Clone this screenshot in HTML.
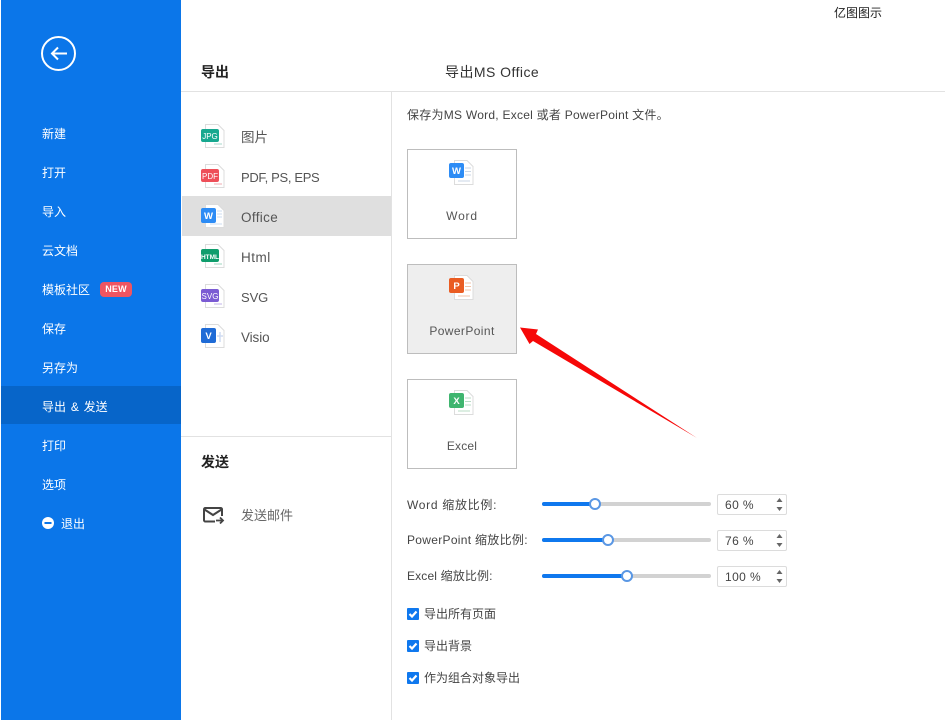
<!DOCTYPE html>
<html><head><meta charset="utf-8">
<style>
html,body{margin:0;padding:0;background:#fff}
#p{position:relative;width:945px;height:720px;overflow:hidden;background:#fff;font-family:"Liberation Sans","Noto Sans CJK SC",sans-serif;color:#4a4a4a;font-size:12px}
#p div,#p span.a,#p svg{position:absolute}
.t{white-space:nowrap;line-height:18px}
.m{left:42px;color:#fff;font-size:12px;line-height:18px;white-space:nowrap}
.l{left:241px;font-size:13.5px;line-height:20px;color:#555;white-space:nowrap}
.b{left:407px;width:108px;height:88px;border:1px solid #bdbdbd;background:#fff}
.bl{left:407px;width:110px;text-align:center;font-size:12px;line-height:18px;color:#555;letter-spacing:.4px}
.sl{left:407px;font-size:12px;line-height:18px;color:#444;white-space:nowrap;letter-spacing:.3px}
.tr{left:542px;width:169px;height:4px;border-radius:2px;background:#d2d2d2}
.fi{left:542px;height:4px;border-radius:2px;background:#0f78ee}
.th{width:8px;height:8px;border:2px solid #5a97e4;border-radius:50%;background:#fff}
.in{left:717px;width:68px;height:19px;border:1px solid #dcdcdc;border-radius:2px;background:#fff}
.v{left:725px;font-size:12px;line-height:18px;color:#444;letter-spacing:.4px;white-space:nowrap}
.c{left:407px;width:12px;height:12px;background:#0f78ee;border-radius:1px}
.cl{left:424px;font-size:12px;line-height:18px;color:#444;white-space:nowrap}
</style></head><body><div id="p">
<div style="left:1px;top:0;width:180px;height:720px;background:#0b76e9"></div>
<div style="left:1px;top:386px;width:180px;height:38px;background:#0765c9"></div>
<svg style="left:40px;top:35px" width="38" height="38" viewBox="0 0 38 38" fill="none" stroke="#fff"><circle cx="18.500" cy="18.500" r="16.500" stroke-width="2"/><path d="M12 18.500H27M18 12.500L12 18.500L18 24.500" stroke-width="2"/></svg>
<div class="m" style="top:125px">新建</div>
<div class="m" style="top:164px">打开</div>
<div class="m" style="top:203px">导入</div>
<div class="m" style="top:242px">云文档</div>
<div class="m" style="top:281px">模板社区</div>
<div style="left:100px;top:282px;width:32px;height:15px;border-radius:4px;background:#ef5561;color:#fff;font-size:9px;font-weight:bold;line-height:15px;text-align:center;letter-spacing:.2px">NEW</div>
<div class="m" style="top:320px">保存</div>
<div class="m" style="top:359px">另存为</div>
<div class="m" style="top:398px;word-spacing:1.500px">导出 &amp; 发送</div>
<div class="m" style="top:437px">打印</div>
<div class="m" style="top:476px">选项</div>
<svg style="left:42px;top:517px" width="12" height="12"><circle cx="6" cy="6" r="6" fill="#fff"/><rect x="2.500" y="5" width="7" height="2" fill="#0b76e9"/></svg>
<div class="m" style="top:515px;left:61px">退出</div>

<div style="left:181px;top:91px;width:764px;height:1px;background:#e2e2e2"></div>
<div style="left:391px;top:92px;width:1px;height:628px;background:#e2e2e2"></div>
<div style="left:181px;top:436px;width:210px;height:1px;background:#e2e2e2"></div>
<div class="t" style="left:834px;top:4px;color:#222;font-size:12px">亿图图示</div>
<div class="t" style="left:201px;top:63px;color:#222;font-size:14px;font-weight:bold">导出</div>
<div class="t" style="left:445px;top:63px;color:#333;font-size:14px;letter-spacing:.45px">导出MS Office</div>
<div class="t" style="left:407px;top:106px;color:#444;font-size:12px;letter-spacing:.25px">保存为MS Word, Excel 或者 PowerPoint 文件。</div>

<div style="left:182px;top:196px;width:209px;height:40px;background:#dfdfdf"></div>
<svg style="left:201px;top:124px" width="26" height="240" viewBox="0 0 26 240">
<g fill="#fff" stroke="#dcdcdc"><path d="M4.500 .5H17L23 6.500V23.500H4.500Z"/><path d="M4.500 40.500H17L23 46.500V63.500H4.500Z"/><path d="M4.500 80.500H17L23 86.500V103.500H4.500Z"/><path d="M4.500 120.500H17L23 126.500V143.500H4.500Z"/><path d="M4.500 160.500H17L23 166.500V183.500H4.500Z"/><path d="M4.500 200.500H17L23 206.500V223.500H4.500Z"/></g>
<g stroke-width="1.500"><path d="M13 20H21" stroke="#c4e4dc"/><path d="M13 60H21" stroke="#f4c7ca"/><path d="M16 87H21M16 90H21M16 93H21M9 100H21" stroke="#cddcf0" stroke-width="1"/><path d="M13 140H21" stroke="#bde3d4"/><path d="M13 180H21" stroke="#d6ccf0"/><path d="M19 208V218M16 212H22" stroke="#cfdcf2"/></g>
<rect x="0" y="5" width="18" height="13" rx="2" fill="#17a88f"/><rect x="0" y="45" width="18" height="13" rx="2" fill="#ee4f59"/><rect x="0" y="84" width="15" height="15" rx="2" fill="#2d8cf5"/><rect x="0" y="125" width="18" height="13" rx="2" fill="#0f9d6c"/><rect x="0" y="165" width="18" height="13" rx="2" fill="#7b5bd3"/><rect x="0" y="204" width="15" height="15" rx="2" fill="#1f6bd6"/>
<g fill="#fff" text-anchor="middle" font-family="Liberation Sans"><text x="9" y="15" font-size="8">JPG</text><text x="9" y="55" font-size="8">PDF</text><text x="7.500" y="95" font-size="9.500" font-weight="bold">W</text><text x="9" y="135" font-size="6.500" font-weight="bold">HTML</text><text x="9" y="175" font-size="8">SVG</text><text x="7.500" y="215" font-size="9.500" font-weight="bold">V</text></g>
</svg>
<div class="l" style="top:128px">图片</div>
<div class="l" style="top:168px;font-size:13px;letter-spacing:-.33px">PDF, PS, EPS</div>
<div class="l" style="top:208px;letter-spacing:.35px">Office</div>
<div class="l" style="top:248px;letter-spacing:.5px">Html</div>
<div class="l" style="top:288px;font-size:13px;letter-spacing:-.1px">SVG</div>
<div class="l" style="top:328px;letter-spacing:-.1px">Visio</div>

<div class="t" style="left:201px;top:453px;color:#222;font-size:14px;font-weight:bold">发送</div>
<svg style="left:202px;top:506px" width="23" height="20" viewBox="0 0 23 20" fill="none" stroke="#444" stroke-width="2"><path d="M13 15.500H3A1.500 1.500 0 0 1 2 14V3A1.500 1.500 0 0 1 3 2H18.500A1.500 1.500 0 0 1 20 3V10M2.500 3.500L11 9L19.500 3.500"/><path d="M14 14.500H21M18 11.500L21 14.500L18 17.500" stroke-width="1.800"/></svg>
<div class="t" style="left:241px;top:507px;color:#666;font-size:13px">发送邮件</div>

<div class="b" style="top:149px"></div>
<div class="b" style="top:264px;background:#eeeeee"></div>
<div class="b" style="top:379px"></div>
<svg style="left:449px;top:160px" width="26" height="255" viewBox="0 0 26 255">
<g fill="#fff" stroke="#dcdcdc"><path d="M5.500 .5H18L24 6.500V24.500H5.500Z"/><path d="M5.500 115.500H18L24 121.500V139.500H5.500Z"/><path d="M5.500 230.500H18L24 236.500V254.500H5.500Z"/></g>
<g stroke="#c9d6e6"><path d="M16 8H22M16 11.500H22M16 15H22M9 21H21"/><path d="M16 123H22M16 126.500H22M16 130H22M9 136H21" stroke="#f2c3a8"/><path d="M16 238H22M16 241.500H22M16 245H22M9 251H21" stroke="#b8dcc6"/></g>
<rect x="0" y="3" width="15" height="15" rx="2" fill="#2d8cf5"/><rect x="0" y="118" width="15" height="15" rx="2" fill="#ea5c22"/><rect x="0" y="233" width="15" height="15" rx="2" fill="#3fb56f"/>
<g fill="#fff" text-anchor="middle" font-family="Liberation Sans" font-weight="bold" font-size="9.500"><text x="7.500" y="14">W</text><text x="7.500" y="129">P</text><text x="7.500" y="244">X</text></g>
</svg>
<div class="bl" style="top:207px;letter-spacing:.8px">Word</div>
<div class="bl" style="top:322px">PowerPoint</div>
<div class="bl" style="top:437px;letter-spacing:.2px">Excel</div>

<svg style="left:515px;top:320px" width="185" height="125" viewBox="0 0 185 125"><path d="M5 7.500L23 9.500L21 14L182 118L18 21L14.500 24Z" fill="#f60808"/></svg>

<div class="sl" style="top:496px;letter-spacing:.7px">Word 缩放比例:</div>
<div class="sl" style="top:531px">PowerPoint 缩放比例:</div>
<div class="sl" style="top:567px;letter-spacing:.15px">Excel 缩放比例:</div>
<div class="tr" style="top:502px"></div><div class="fi" style="top:502px;width:53px"></div><div class="th" style="left:589px;top:498px"></div>
<div class="tr" style="top:538px"></div><div class="fi" style="top:538px;width:66px"></div><div class="th" style="left:602px;top:534px"></div>
<div class="tr" style="top:574px"></div><div class="fi" style="top:574px;width:85px"></div><div class="th" style="left:621px;top:570px"></div>
<div class="in" style="top:494px"></div><div class="in" style="top:530px"></div><div class="in" style="top:566px"></div>
<div class="v" style="top:496px">60 %</div><div class="v" style="top:532px">76 %</div><div class="v" style="top:568px">100 %</div>
<svg style="left:775px;top:494px" width="9" height="95" viewBox="0 0 9 95" fill="#666"><path d="M4.500 4L7.500 8H1.500ZM1.500 13H7.500L4.500 17Z"/><path d="M4.500 40L7.500 44H1.500ZM1.500 49H7.500L4.500 53Z"/><path d="M4.500 76L7.500 80H1.500ZM1.500 85H7.500L4.500 89Z"/></svg>

<div class="c" style="top:608px"></div><div class="c" style="top:640px"></div><div class="c" style="top:672px"></div>
<svg style="left:407px;top:608px" width="12" height="76" viewBox="0 0 12 76" fill="none" stroke="#fff" stroke-width="2.200"><path d="M2.500 6L5 8.500L9.500 3.500M2.500 38L5 40.500L9.500 35.500M2.500 70L5 72.500L9.500 67.500"/></svg>
<div class="cl" style="top:605px">导出所有页面</div>
<div class="cl" style="top:637px">导出背景</div>
<div class="cl" style="top:669px">作为组合对象导出</div>
</div></body></html>
